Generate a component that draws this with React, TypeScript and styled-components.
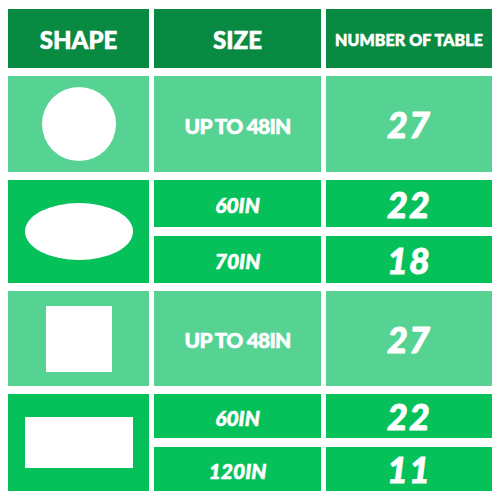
import React from 'react'
import styled, { createGlobalStyle } from 'styled-components'

const colors = {
  dark: '#088a43',
  light: '#56d392',
  bright: '#06c05a',
}

type Shape = 'circle' | 'ellipse' | 'square' | 'rect'
type Tone = 'light' | 'bright'

type TableRow = {
  shape: Shape
  tone: Tone
  height: number
  sizes: { label: string; count: string }[]
}

const rows: TableRow[] = [
  { shape: 'circle', tone: 'light', height: 96, sizes: [{ label: 'UP TO 48IN', count: '27' }] },
  {
    shape: 'ellipse',
    tone: 'bright',
    height: 103,
    sizes: [
      { label: '60IN', count: '22' },
      { label: '70IN', count: '18' },
    ],
  },
  { shape: 'square', tone: 'light', height: 95, sizes: [{ label: 'UP TO 48IN', count: '27' }] },
  {
    shape: 'rect',
    tone: 'bright',
    height: 97,
    sizes: [
      { label: '60IN', count: '22' },
      { label: '120IN', count: '11' },
    ],
  },
]

const GlobalStyle = createGlobalStyle`
  html, body {
    margin: 0;
    padding: 0;
    background: #ffffff;
  }
  body {
    font-family: Lato, "Open Sans", sans-serif;
  }
`

const Page = styled.div`
  width: 500px;
  height: 500px;
  box-sizing: border-box;
  padding: 9px 8px;
  display: flex;
  flex-direction: column;
  gap: 8px;
`

const Group = styled.div<{ $height: number; $split: boolean }>`
  display: grid;
  grid-template-columns: 141px 167px 166px;
  grid-template-rows: ${(p) => (p.$split ? '1fr 1fr' : '1fr')};
  column-gap: 5px;
  row-gap: 9px;
  height: ${(p) => p.$height}px;
`

const Cell = styled.div<{ $tone: Tone | 'dark'; $span?: number; $col?: number }>`
  background: ${(p) => colors[p.$tone]};
  display: flex;
  align-items: center;
  justify-content: center;
  color: #ffffff;
  grid-row: ${(p) => (p.$span ? `span ${p.$span}` : 'auto')};
  grid-column: ${(p) => p.$col ?? 'auto'};
`

const HeadText = styled.span<{ $small?: boolean }>`
  font-family: Lato, "Open Sans", sans-serif;
  font-weight: 900;
  font-size: ${(p) => (p.$small ? '16px' : '24px')};
  letter-spacing: ${(p) => (p.$small ? '0.1px' : '0')};
  -webkit-text-stroke: 0.6px #ffffff;
  padding-top: 2px;
`

const SizeText = styled.span<{ $italic: boolean }>`
  font-family: Lato, "Open Sans", sans-serif;
  font-weight: 900;
  font-size: 21px;
  font-style: ${(p) => (p.$italic ? 'italic' : 'normal')};
  letter-spacing: ${(p) => (p.$italic ? '0' : '-0.8px')};
  -webkit-text-stroke: 0.6px #ffffff;
  padding-top: 2px;
`

const CountText = styled.span`
  font-family: Lato, "Open Sans", sans-serif;
  font-weight: 900;
  font-style: italic;
  font-size: 36px;
  letter-spacing: 1px;
  -webkit-text-stroke: 0.8px #ffffff;
`

const shapeSizes: Record<Shape, { w: number; h: number; radius: string }> = {
  circle: { w: 74, h: 74, radius: '50%' },
  ellipse: { w: 108, h: 57, radius: '50%' },
  square: { w: 66, h: 66, radius: '0' },
  rect: { w: 108, h: 51, radius: '0' },
}

const ShapeMark = styled.div<{ $shape: Shape }>`
  background: #ffffff;
  width: ${(p) => shapeSizes[p.$shape].w}px;
  height: ${(p) => shapeSizes[p.$shape].h}px;
  border-radius: ${(p) => shapeSizes[p.$shape].radius};
`

const App: React.FC = () => {
  return (
    <>
      <GlobalStyle />
      <Page>
        <Group $height={59} $split={false}>
          <Cell $tone="dark">
            <HeadText>SHAPE</HeadText>
          </Cell>
          <Cell $tone="dark">
            <HeadText>SIZE</HeadText>
          </Cell>
          <Cell $tone="dark">
            <HeadText $small>NUMBER OF TABLE</HeadText>
          </Cell>
        </Group>
        {rows.map((r, i) => (
          <Group key={i} $height={r.height} $split={r.sizes.length > 1}>
            <Cell $tone={r.tone} $span={r.sizes.length}>
              <ShapeMark $shape={r.shape} />
            </Cell>
            {r.sizes.map((s, j) => (
              <React.Fragment key={j}>
                <Cell $tone={r.tone} $col={2}>
                  <SizeText $italic={r.sizes.length > 1}>{s.label}</SizeText>
                </Cell>
                <Cell $tone={r.tone} $col={3}>
                  <CountText>{s.count}</CountText>
                </Cell>
              </React.Fragment>
            ))}
          </Group>
        ))}
      </Page>
    </>
  )
}

export default App
